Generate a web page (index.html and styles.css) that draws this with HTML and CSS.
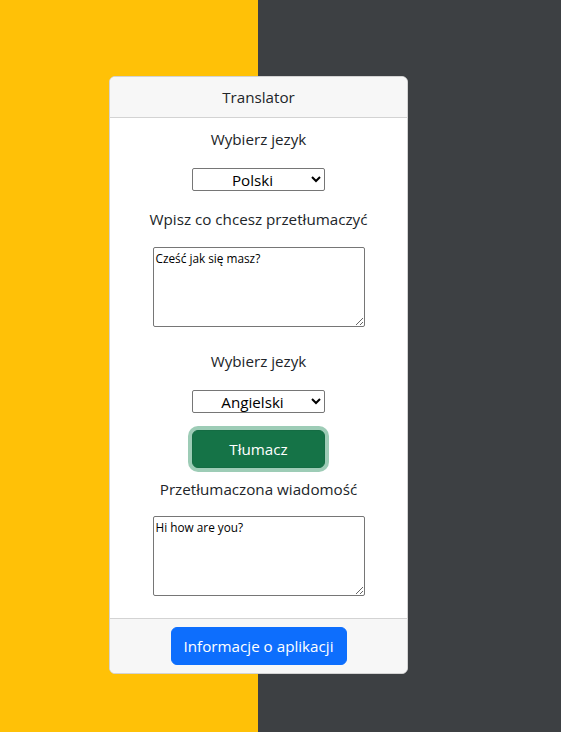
FILE: index.html
```html
<!DOCTYPE html>
<html lang="pl">
<head>
<meta charset="utf-8">
<title>Translator</title>
<link rel="stylesheet" href="styles.css">
</head>
<body>
<div class="card">
  <div class="card-header">Translator</div>
  <div class="card-body">
    <p class="label first">Wybierz jezyk</p>
    <select class="lang">
      <option>Polski</option>
      <option>Angielski</option>
    </select>
    <p class="label">Wpisz co chcesz przetłumaczyć</p>
    <textarea class="box">Cześć jak się masz?</textarea>
    <p class="label second">Wybierz jezyk</p>
    <select class="lang">
      <option>Angielski</option>
      <option>Polski</option>
    </select>
    <button class="btn-translate" type="button">Tłumacz</button>
    <p class="label result">Przetłumaczona wiadomość</p>
    <textarea class="box">Hi how are you?</textarea>
  </div>
  <div class="card-footer">
    <button class="btn-info" type="button">Informacje o aplikacji</button>
  </div>
</div>
</body>
</html>
```

FILE: styles.css
```css
* { box-sizing: border-box; }
html, body { height: 100%; }
body {
  margin: 0;
  background: linear-gradient(to right, #ffc107 0, #ffc107 258px, #3d4043 258px, #3d4043 100%);
  font-family: "Segoe UI", "Open Sans", "Noto Sans", sans-serif;
  font-size: 15.2px;
  color: #212529;
  padding-top: 76px;
}
.card {
  width: 299px;
  margin-left: 109px;
  background: #fff;
  border: 1px solid #d3d3d3;
  border-radius: 6px;
  overflow: hidden;
}
.card-header {
  height: 41px;
  background: #f7f7f7;
  border-bottom: 1px solid #d3d3d3;
  display: flex;
  align-items: center;
  justify-content: center;
  line-height: 24px;
}
.card-body {
  display: flex;
  flex-direction: column;
  align-items: center;
  padding: 9px 0 22px;
}
.label {
  margin: 0;
  line-height: 24px;
}
.first { margin-bottom: 17px; }
.lang {
  width: 133px;
  height: 23px;
  font-family: inherit;
  font-size: 15.2px;
  color: #000;
  text-align: center;
  text-align-last: center;
  border: 1px solid #767676;
  border-radius: 2px;
  background: #fff;
  padding: 0 4px;
}
.label:not(.first) { margin-top: 16px; margin-bottom: 16px; }
.label.second { margin-top: 22px; margin-bottom: 17px; }
.label.result { margin-top: 9px; margin-bottom: 15px; }
.box {
  width: 212px;
  height: 80px;
  font-family: inherit;
  font-size: 11.8px;
  line-height: 16px;
  color: #000;
  border: 1px solid #767676;
  border-radius: 2px;
  padding: 2px;
  resize: both;
}
.btn-translate {
  margin-top: 17px;
  width: 133px;
  height: 38px;
  font-family: inherit;
  font-size: 15.2px;
  color: #fff;
  background: #157347;
  border: 1px solid #146c43;
  border-radius: 6px;
  box-shadow: 0 0 0 4px rgba(60, 153, 110, 0.5);
}
.card-footer {
  background: #f7f7f7;
  border-top: 1px solid #d3d3d3;
  display: flex;
  justify-content: center;
  padding: 8px 0 8px;
}
.btn-info {
  width: 176px;
  height: 38px;
  font-family: inherit;
  font-size: 15.2px;
  color: #fff;
  background: #0d6efd;
  border: 1px solid #0d6efd;
  border-radius: 6px;
}
```
